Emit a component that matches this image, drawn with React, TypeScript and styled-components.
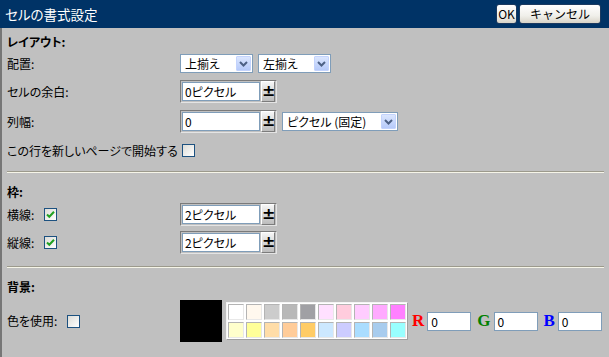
import React from 'react';
import styled, { createGlobalStyle } from 'styled-components';

const GlobalStyle = createGlobalStyle`
  html, body {
    margin: 0;
    padding: 0;
    background: #c0c0c0;
  }
  body {
    font-family: "Noto Sans CJK JP", "Noto Sans", sans-serif;
    font-size: 12px;
    color: #000;
  }
  #root {
    width: 609px;
    height: 357px;
  }
`;

const PALETTE = [
  ['#ffffff', '#fff8ee', '#cccccc', '#b8b8b8', '#a0a0a4', '#ffe0ff', '#ffccdd', '#ffccff', '#ffaaff', '#ff80ff'],
  ['#ffffcc', '#ffff99', '#ffdda8', '#ffcc99', '#ffcc66', '#cce8ff', '#ccccff', '#aaddff', '#a8ccee', '#99ffff'],
];

const App = () => {
  return (
    <>
      <GlobalStyle />
      <StyledDialog>
        <StyledTitleBar>
          <StyledTitle>セルの書式設定</StyledTitle>
          <StyledTitleButtons>
            <StyledDialogButton width={21}>OK</StyledDialogButton>
            <StyledDialogButton width={82}>キャンセル</StyledDialogButton>
          </StyledTitleButtons>
        </StyledTitleBar>

        <StyledBody>
          <StyledHeading top={6}>レイアウト:</StyledHeading>
          <StyledRow top={4} height={19}>
            <StyledLabel>配置:</StyledLabel>
            <StyledControls>
              <Select value="上揃え" width={73} />
              <Select value="左揃え" width={73} />
            </StyledControls>
          </StyledRow>
          <StyledRow top={7} height={23}>
            <StyledLabel>セルの余白:</StyledLabel>
            <StyledControls>
              <SpinBox value="0ピクセル" />
            </StyledControls>
          </StyledRow>
          <StyledRow top={7} height={23}>
            <StyledLabel>列幅:</StyledLabel>
            <StyledControls>
              <SpinBox value="0" />
              <Select value="ピクセル (固定)" width={116} />
            </StyledControls>
          </StyledRow>
          <StyledRow top={9} height={17}>
            <StyledLabel>この行を新しいページで開始する</StyledLabel>
            <StyledControls>
              <CheckBox checked={false} />
            </StyledControls>
          </StyledRow>

          <StyledDivider />

          <StyledHeading top={11}>枠:</StyledHeading>
          <StyledRow top={3} height={23}>
            <StyledLabel>
              横線:
              <CheckBox checked={true} />
            </StyledLabel>
            <StyledControls>
              <SpinBox value="2ピクセル" />
            </StyledControls>
          </StyledRow>
          <StyledRow top={5} height={23}>
            <StyledLabel>
              縦線:
              <CheckBox checked={true} />
            </StyledLabel>
            <StyledControls>
              <SpinBox value="2ピクセル" />
            </StyledControls>
          </StyledRow>

          <StyledDivider />

          <StyledHeading top={11}>背景:</StyledHeading>
          <StyledRow top={5} height={42}>
            <StyledLabel>
              色を使用:
              <CheckBox checked={false} />
            </StyledLabel>
            <StyledColorControls>
              <StyledSwatch />
              <StyledPalette>
                {PALETTE.flat().map((color, i) => (
                  <StyledPaletteCell key={i} style={{ background: color }} />
                ))}
              </StyledPalette>
              <StyledChannels>
                <ColorChannel name="R" color="#ff0000" />
                <ColorChannel name="G" color="#008000" />
                <ColorChannel name="B" color="#0000ff" />
              </StyledChannels>
            </StyledColorControls>
          </StyledRow>
        </StyledBody>
      </StyledDialog>
    </>
  );
};

const StyledDialog = styled.div`
  display: flex;
  flex-direction: column;
  width: 609px;
  height: 357px;
`;

const StyledTitleBar = styled.div`
  display: flex;
  align-items: center;
  justify-content: space-between;
  height: 28px;
  padding: 0 8px 0 5px;
  background: #003366;
  box-sizing: border-box;
`;
const StyledTitle = styled.div`
  color: #fff;
  font-size: 13.5px;
  line-height: 16px;
  font-feature-settings: 'palt';
`;
const StyledTitleButtons = styled.div`
  display: flex;
  gap: 2px;
`;
const StyledDialogButton = styled.button<{ width: number }>`
  width: ${({ width }) => width}px;
  height: 20px;
  padding: 0;
  border: 1px solid #1c3a60;
  border-radius: 3px;
  background: linear-gradient(#ffffff, #f0efea 60%, #d8d4c8);
  font-family: "Noto Sans CJK JP", sans-serif;
  font-size: 12px;
  line-height: 18px;
  color: #000;
  box-sizing: border-box;
`;

const StyledBody = styled.div`
  flex: 1;
  display: flex;
  flex-direction: column;
  border-left: 2px solid #767676;
  padding: 0 5px 0 5px;
`;

const StyledHeading = styled.div<{ top: number }>`
  margin-top: ${({ top }) => top}px;
  height: 16px;
  line-height: 16px;
  font-weight: bold;
  font-size: 12px;
  font-feature-settings: 'palt';
`;

const StyledRow = styled.div<{ top: number; height: number }>`
  display: flex;
  align-items: center;
  margin-top: ${({ top }) => top}px;
  height: ${({ height }) => height}px;
`;
const StyledLabel = styled.div`
  display: flex;
  align-items: center;
  gap: 8px;
  width: 173px;
  flex-shrink: 0;
  line-height: 16px;
  font-feature-settings: 'palt';
`;
const StyledControls = styled.div`
  display: flex;
  align-items: center;
  gap: 5px;
`;

const StyledDivider = styled.div`
  margin-top: 12px;
  width: 597px;
  border-top: 1px solid #9c9a8c;
  border-bottom: 1px solid #f6f5e8;
`;

// select box (XP look)
type SelectProps = { value: string; width: number };

function Select({ value, width }: SelectProps) {
  return (
    <StyledSelect width={width}>
      <StyledSelectText>{value}</StyledSelectText>
      <StyledSelectArrow>
        <svg width="9" height="6" viewBox="0 0 9 6">
          <path d="M1 1 L4.5 4.5 L8 1" fill="none" stroke="#4d6185" strokeWidth="2" />
        </svg>
      </StyledSelectArrow>
    </StyledSelect>
  );
}

const StyledSelect = styled.div<{ width: number }>`
  display: flex;
  align-items: center;
  width: ${({ width }) => width}px;
  height: 19px;
  padding: 1px;
  border: 1px solid #7f9db9;
  background: #fff;
  box-sizing: border-box;
`;
const StyledSelectText = styled.div`
  flex: 1;
  padding-left: 3px;
  line-height: 15px;
  white-space: nowrap;
  font-feature-settings: 'palt';
`;
const StyledSelectArrow = styled.div`
  display: flex;
  align-items: center;
  justify-content: center;
  width: 15px;
  height: 15px;
  border: 1px solid #c3d3fd;
  border-radius: 1px;
  background: linear-gradient(#dbe6fe, #b6cafa);
  box-sizing: border-box;
`;

// text field with a ± spinner
function SpinBox({ value }: { value: string }) {
  return (
    <StyledSpinBox>
      <StyledSpinInput>{value}</StyledSpinInput>
      <StyledSpinButton>±</StyledSpinButton>
    </StyledSpinBox>
  );
}

const StyledSpinBox = styled.div`
  display: flex;
  align-items: center;
  gap: 1px;
  padding: 1px;
  border: 1px solid;
  border-color: #7a7a7a #e4e4e4 #e4e4e4 #7a7a7a;
  box-sizing: border-box;
  height: 23px;
`;
const StyledSpinInput = styled.div`
  width: 78px;
  height: 19px;
  padding-left: 2px;
  border: 1px solid #7f9db9;
  background: #fff;
  line-height: 17px;
  box-sizing: border-box;
  font-feature-settings: 'palt';
`;
const StyledSpinButton = styled.div`
  width: 14px;
  height: 21px;
  border: 1px solid;
  border-color: #ffffff #7c7c7c #7c7c7c #ffffff;
  background: linear-gradient(#f6f6f6, #bcbcbc);
  box-sizing: border-box;
  font-family: "DejaVu Sans", sans-serif;
  font-weight: bold;
  font-size: 16px;
  line-height: 18px;
  text-align: center;
`;

function CheckBox({ checked }: { checked: boolean }) {
  return (
    <StyledCheckBox>
      {checked && (
        <svg width="11" height="11" viewBox="0 0 11 11">
          <path d="M2 5.5 L4.3 7.8 L9 2.8" fill="none" stroke="#21a121" strokeWidth="2" />
        </svg>
      )}
    </StyledCheckBox>
  );
}

const StyledCheckBox = styled.div`
  display: flex;
  align-items: center;
  justify-content: center;
  width: 13px;
  height: 13px;
  border: 1px solid #1c5180;
  background: linear-gradient(135deg, #dcdcd7, #ffffff);
  box-sizing: border-box;
  margin-left: 2px;
`;

const StyledColorControls = styled.div`
  display: flex;
  align-items: center;
  gap: 4px;
`;
const StyledSwatch = styled.div`
  width: 42px;
  height: 42px;
  background: #000;
`;
const StyledPalette = styled.div`
  display: grid;
  grid-template-columns: repeat(10, 16px);
  grid-auto-rows: 16px;
  gap: 2px;
  padding: 1px;
  border: 1px solid;
  border-color: #f4f4f4 #a0a0a0 #a0a0a0 #f4f4f4;
  background: #ffffff;
`;
const StyledPaletteCell = styled.div`
  border: 1px solid;
  border-color: #b4b4b4 #e8e8e8 #e8e8e8 #b4b4b4;
  box-sizing: border-box;
`;

const StyledChannels = styled.div`
  display: flex;
  align-items: center;
  gap: 6px;
`;

function ColorChannel({ name, color }: { name: string; color: string }) {
  return (
    <StyledChannel>
      <StyledChannelName color={color}>{name}</StyledChannelName>
      <StyledChannelInput>0</StyledChannelInput>
    </StyledChannel>
  );
}

const StyledChannel = styled.div`
  display: flex;
  align-items: center;
  gap: 3px;
`;
const StyledChannelName = styled.span<{ color: string }>`
  font-family: "Liberation Serif", serif;
  font-weight: bold;
  font-size: 17px;
  color: ${({ color }) => color};
`;
const StyledChannelInput = styled.div`
  width: 44px;
  height: 19px;
  padding-left: 3px;
  border: 1px solid #7f9db9;
  background: #fff;
  line-height: 17px;
  box-sizing: border-box;
`;

export default App;
